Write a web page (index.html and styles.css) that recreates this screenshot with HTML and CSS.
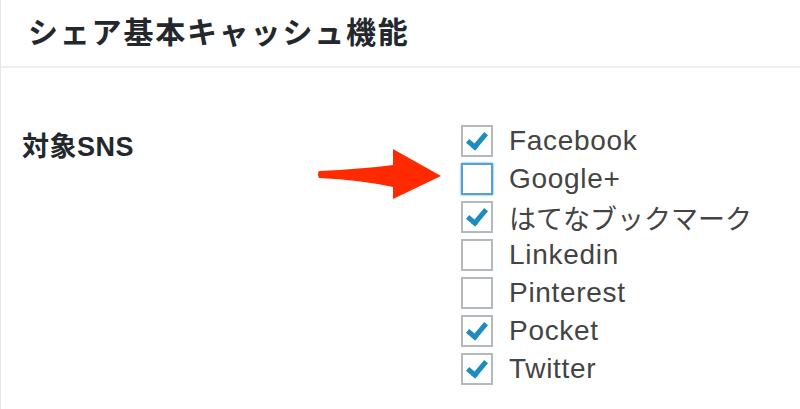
FILE: index.html
```html
<!DOCTYPE html>
<html lang="ja">
<head>
    <meta charset="UTF-8">
    <meta name="viewport" content="width=device-width, initial-scale=1.0">
    <title>シェア基本キャッシュ機能</title>
    <link rel="stylesheet" href="styles.css">
</head>
<body>
    <div class="panel">
        <h2 class="panel-title">シェア基本キャッシュ機能</h2>
        <div class="setting-row">
            <div class="setting-label">対象SNS</div>
            <div class="arrow-cell">
                <svg width="124" height="52" viewBox="316 147 124 52">
                    <path d="M318,169 Q316,172 318,176 Q360,178 392,185 L392,197 L440,174 L392,147 L392,163 Q360,167 318,169 Z" fill="#ff2a00"/>
                </svg>
            </div>
            <div class="sns-list">
                <label class="sns"><span class="box checked"></span>Facebook</label>
                <label class="sns"><span class="box focus"></span>Google+</label>
                <label class="sns ja"><span class="box checked"></span>はてなブックマーク</label>
                <label class="sns"><span class="box"></span>Linkedin</label>
                <label class="sns"><span class="box"></span>Pinterest</label>
                <label class="sns"><span class="box checked"></span>Pocket</label>
                <label class="sns"><span class="box checked"></span>Twitter</label>
            </div>
        </div>
    </div>
</body>
</html>
```

FILE: styles.css
```css
body {
    margin: 0;
    padding: 0;
    background-color: #fff;
    font-family: "Liberation Sans", "Noto Sans CJK JP", sans-serif;
    color: #32373c;
}
.panel {
    border-left: 1px solid #e5e5e5;
    height: 409px;
    box-sizing: border-box;
}
.panel-title {
    margin: 0;
    padding: 10px 0 0 27px;
    height: 56px;
    border-bottom: 2px solid #eee;
    font-family: "Noto Sans CJK JP", sans-serif;
    font-size: 30px;
    font-weight: bold;
    line-height: 40px;
    color: #23282d;
    letter-spacing: 1.8px;
}
.setting-row {
    display: flex;
    padding-top: 54px;
}
.setting-label {
    width: 295px;
    padding: 5px 0 0 21px;
    font-size: 27px;
    font-weight: bold;
    color: #23282d;
    line-height: 40px;
    letter-spacing: 0.5px;
}
.arrow-cell {
    width: 144px;
    padding-top: 27px;
}
.arrow-cell svg {
    display: block;
}
.sns-list {
    display: flex;
    flex-direction: column;
}
.sns {
    display: flex;
    align-items: center;
    height: 38px;
    font-size: 28px;
    color: #444;
    letter-spacing: 0.7px;
}
.sns.ja {
    font-size: 27px;
    letter-spacing: 0;
}
.box {
    width: 32px;
    height: 32px;
    box-sizing: border-box;
    border: 2px solid #b4b9be;
    background-color: #fff;
    margin-right: 16px;
    position: relative;
}
.box.focus {
    border-color: #5b9dd9;
    box-shadow: 0 0 2px rgba(30, 140, 190, 0.8);
}
.box.checked::after {
    content: "";
    position: absolute;
    left: 8px;
    top: 2px;
    width: 7px;
    height: 15px;
    border-right: 5px solid #1e8cbe;
    border-bottom: 5px solid #1e8cbe;
    transform: rotate(40deg);
}
```
